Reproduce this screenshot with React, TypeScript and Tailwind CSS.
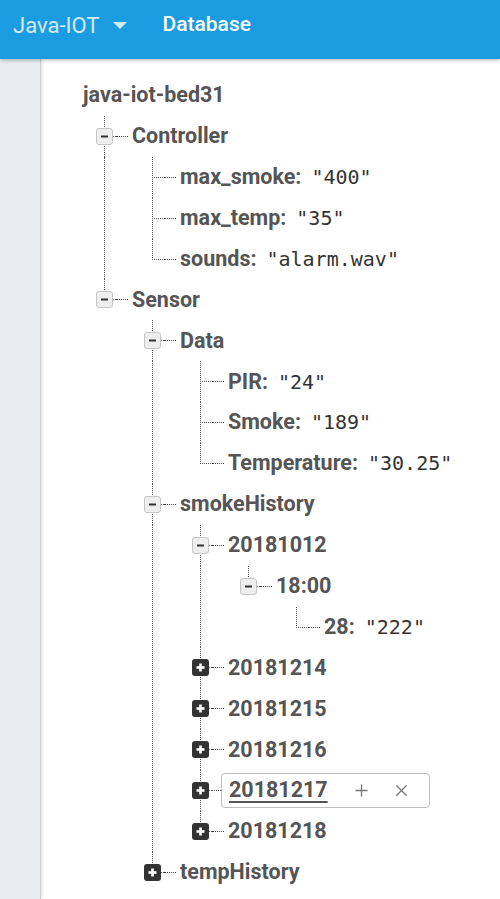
import { Plus, X } from "lucide-react";

type Node = {
  name: string;
  value?: string;
  open?: boolean;
  active?: boolean;
  children?: Node[];
};

const tree: Node[] = [
  {
    name: "Controller",
    open: true,
    children: [
      { name: "max_smoke", value: '"400"' },
      { name: "max_temp", value: '"35"' },
      { name: "sounds", value: '"alarm.wav"' },
    ],
  },
  {
    name: "Sensor",
    open: true,
    children: [
      {
        name: "Data",
        open: true,
        children: [
          { name: "PIR", value: '"24"' },
          { name: "Smoke", value: '"189"' },
          { name: "Temperature", value: '"30.25"' },
        ],
      },
      {
        name: "smokeHistory",
        open: true,
        children: [
          {
            name: "20181012",
            open: true,
            children: [
              {
                name: "18:00",
                open: true,
                children: [{ name: "28", value: '"222"' }],
              },
            ],
          },
          { name: "20181214", children: [] },
          { name: "20181215", children: [] },
          { name: "20181216", children: [] },
          { name: "20181217", children: [], active: true },
          { name: "20181218", children: [] },
        ],
      },
      { name: "tempHistory", children: [] },
    ],
  },
];

const ROW = "h-[40.9px]";

function Rail({ node, last }: { node: Node; last: boolean }) {
  const leaf = node.value !== undefined;
  return (
    <svg width="24" height="40.9" viewBox="0 0 24 40.9" className="block">
      <line x1="12.5" y1="0" x2="12.5" y2={last ? 20.5 : 40.9} stroke="#4a4a4a" strokeDasharray="1 1" />
      {leaf ? (
        <line x1="12" y1="20.5" x2="24" y2="20.5" stroke="#4a4a4a" strokeDasharray="1 1" />
      ) : (
        <>
          <line x1="21" y1="20.5" x2="24" y2="20.5" stroke="#4a4a4a" strokeDasharray="1 1" />
          {node.open ? (
            <g>
              <rect x="4.5" y="12.5" width="16" height="16" rx="2.5" fill="#eeeeee" stroke="#c4c4c4" />
              <rect x="9" y="19.5" width="7" height="2" fill="#333" />
            </g>
          ) : (
            <g>
              <rect x="4" y="12" width="17" height="17" rx="3" fill="#333333" />
              <rect x="8.5" y="19.2" width="8" height="2.6" fill="#fff" />
              <rect x="11.2" y="16.5" width="2.6" height="8" fill="#fff" />
            </g>
          )}
        </>
      )}
    </svg>
  );
}

function Label({ node }: { node: Node }) {
  if (node.active) {
    return (
      <div className="flex h-[35px] w-[209px] items-center rounded-[4px] border border-[#bdbdbd] pl-[7px]">
        <span className="font-bold text-[#555] underline decoration-[1.5px] underline-offset-[4px]">
          {node.name}
        </span>
        <Plus size={19} strokeWidth={1.6} className="ml-[24px] text-[#757575]" />
        <X size={19} strokeWidth={1.6} className="ml-[21px] text-[#757575]" />
      </div>
    );
  }
  return (
    <span className="ml-[4px] whitespace-nowrap">
      <span className="font-bold text-[#555]">
        {node.name}
        {node.value !== undefined && ":"}
      </span>
      {node.value !== undefined && (
        <span className="ml-[10px] font-['DejaVu_Sans_Mono',monospace] text-[20px] text-[#333]">
          {node.value}
        </span>
      )}
    </span>
  );
}

function Item({ node, last }: { node: Node; last: boolean }) {
  return (
    <div className="flex">
      <div className="flex w-6 shrink-0 flex-col">
        <Rail node={node} last={last} />
        {!last && <div className="ml-[12px] w-0 flex-1 border-l border-dotted border-[#4a4a4a]" />}
      </div>
      <div>
        <div className={`flex ${ROW} items-center`}>
          <div className={`${node.active ? "w-[9px]" : "w-[12px]"} border-t border-dotted border-[#4a4a4a]`} />
          <Label node={node} />
        </div>
        {node.open && node.children && node.children.length > 0 && (
          <div className="ml-[24px]">
            {node.children.map((c, i) => (
              <Item key={c.name} node={c} last={i === node.children!.length - 1} />
            ))}
          </div>
        )}
      </div>
    </div>
  );
}

export default function App() {
  return (
    <div className="flex h-[899px] w-full flex-col overflow-hidden bg-white font-['Roboto',sans-serif] text-[21.5px]">
      <header className="z-10 flex h-[59px] shrink-0 items-center bg-[#1b9be0] px-[13px] pb-[9px] shadow-[0_1px_4px_rgba(0,0,0,0.3)]">
        <span className="text-[22px] text-white/80">Java-IOT</span>
        <svg width="14" height="7" viewBox="0 0 14 7" className="ml-[14px] mt-[1px]">
          <path d="M0 0h14L7 7z" fill="rgba(255,255,255,0.8)" />
        </svg>
        <span className="ml-[35px] text-[21px] font-medium text-white">Database</span>
      </header>
      <div className="flex flex-1">
        <aside className="w-[41px] shrink-0 border-r border-[#cfd2d5] bg-[#e9ecef] shadow-[1px_0_2px_rgba(0,0,0,0.12)]" />
        <main className="flex-1 pl-[42px] pt-[16px]">
          <div className={`flex ${ROW} items-center font-bold text-[#555]`}>java-iot-bed31</div>
          <div className="ml-[9px]">
            {tree.map((n, i) => (
              <Item key={n.name} node={n} last={i === tree.length - 1} />
            ))}
          </div>
        </main>
      </div>
    </div>
  );
}
